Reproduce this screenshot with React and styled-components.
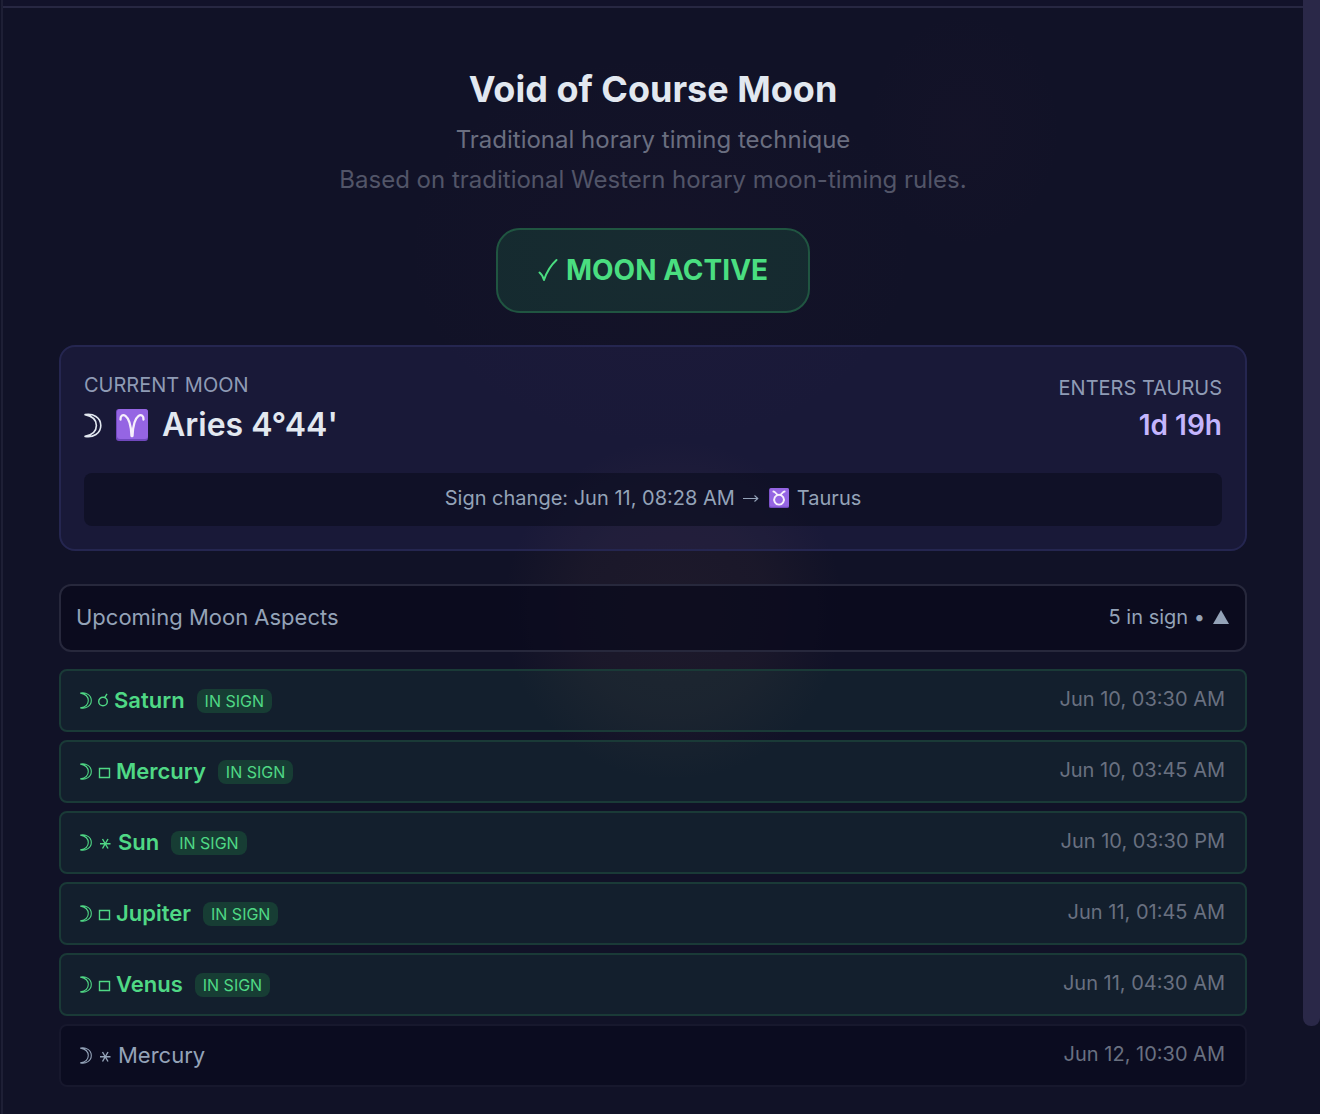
import React, { useState } from "react";
import styled, { createGlobalStyle } from "styled-components";

const GlobalStyle = createGlobalStyle`
  *, *::before, *::after { box-sizing: border-box; }
  html, body, #root { height: 100%; }
  body {
    margin: 0;
    background: #0f1025;
    color: #e2e8f0;
    font-family: Inter, "Liberation Sans", sans-serif;
    overflow: hidden;
  }
  h1, h2, p, ul { margin: 0; padding: 0; }
`;

const Shell = styled.div`
  display: flex;
  height: 100vh;
  padding-left: 1px;
  overflow: hidden;
  background:
    radial-gradient(circle 170px at 51% 610px, rgba(120, 80, 70, 0.12), rgba(120, 80, 70, 0.09) 55%, transparent),
    radial-gradient(ellipse 260px 200px at 50% 250px, rgba(110, 50, 80, 0.04), transparent),
    radial-gradient(ellipse 100px 120px at 73% 130px, rgba(110, 50, 80, 0.03), transparent),
    #111227;
`;

const Panel = styled.div`
  flex: 1;
  min-width: 0;
  border-left: 2px solid #1e1f35;
`;

const TopBar = styled.div`
  height: 8px;
  background: #12122a;
  border-bottom: 2px solid #272742;
`;

const Content = styled.main`
  padding: 57px 56px 24px;
`;

const ScrollTrack = styled.div`
  width: 17px;
  flex: none;
`;

const ScrollThumb = styled.div`
  height: 92.1%;
  background: #2a2848;
  border-radius: 0 0 8px 8px;
`;

const Header = styled.header`
  display: flex;
  flex-direction: column;
  align-items: center;
  text-align: center;
`;

const Title = styled.h1`
  font-size: 36px;
  line-height: 48px;
  font-weight: 700;
  margin-bottom: 7px;
`;

const Subtitle = styled.p`
  font-size: 24px;
  line-height: 40px;
  color: ${(p) => (p.$faint ? "#525568" : "#6a6e80")};
`;

const StatusPill = styled.div`
  display: flex;
  align-items: center;
  gap: 8px;
  margin: 28px 0 32px;
  padding: 20px 40px;
  border: 2px solid #205541;
  border-radius: 24px;
  background: rgba(40, 190, 98, 0.14);
  color: #4ade80;
  font-size: 28px;
  line-height: 41px;
  font-weight: 700;
`;

const MoonCard = styled.section`
  padding: 23px;
  border: 2px solid #252650;
  border-radius: 16px;
  background: rgba(85, 75, 180, 0.13);
`;

const CardTop = styled.div`
  display: flex;
  align-items: center;
  justify-content: space-between;
  margin-bottom: 23px;
`;

const CardColumn = styled.div`
  text-align: ${(p) => (p.$end ? "right" : "left")};
`;

const Label = styled.p`
  font-size: 20px;
  line-height: 30px;
  color: #8f9bb5;
`;

const MoonPosition = styled.h2`
  display: flex;
  align-items: center;
  gap: 14px;
  font-size: 32px;
  line-height: 50px;
  font-weight: 600;
`;

const Countdown = styled.p`
  font-size: 28px;
  line-height: 44px;
  font-weight: 600;
  color: #c4b5fd;
`;

const SignChange = styled.p`
  display: flex;
  align-items: center;
  justify-content: center;
  gap: 8px;
  padding: 10px 12px 13px;
  border-radius: 8px;
  background: rgba(13, 14, 33, 0.7);
  color: #94a3b8;
  font-size: 20px;
  line-height: 30px;
`;

const AspectsToggle = styled.button`
  display: flex;
  align-items: center;
  justify-content: space-between;
  width: 100%;
  margin: 33px 0 17px;
  padding: 15px 16px 17px 15px;
  border: 2px solid #27283c;
  border-radius: 12px;
  background: rgba(9, 10, 28, 0.75);
  color: #94a3b8;
  font-family: inherit;
  font-size: 22px;
  line-height: 32px;
  cursor: pointer;
`;

const ToggleCount = styled.span`
  display: flex;
  align-items: center;
  gap: 8px;
  font-size: 20px;
`;

const AspectList = styled.ul`
  display: flex;
  flex-direction: column;
  gap: 8px;
  list-style: none;
`;

const AspectRow = styled.li`
  display: flex;
  align-items: flex-start;
  justify-content: space-between;
  padding: 12px 20px 12px 19px;
  border: 2px solid ${(p) => (p.$inSign ? "#1a3a37" : "#17182d")};
  border-radius: 8px;
  background: ${(p) => (p.$inSign ? "rgba(55, 190, 125, 0.08)" : "rgba(9, 9, 28, 0.6)")};
  color: ${(p) => (p.$inSign ? "#4fd885" : "#94a3b8")};
`;

const AspectName = styled.div`
  display: flex;
  align-items: center;
  gap: 5px;
  font-size: 22px;
  line-height: 35px;
  font-weight: ${(p) => (p.$inSign ? 600 : 400)};
`;

const Badge = styled.span`
  margin-left: 7px;
  padding: 0 8px;
  border-radius: 8px;
  background: #173d34;
  font-size: 16px;
  line-height: 24px;
  font-weight: 400;
`;

const AspectTime = styled.time`
  font-size: 20px;
  line-height: 32px;
  color: #697080;
`;

function MoonIcon({ width, height }) {
  return (
    <svg width={width} height={height} viewBox="0 0 12 17" role="img" aria-label="Moon" fill="none" stroke="currentColor" strokeWidth="1.1">
      <path d="M.6 1.1C6 .1 11.3 3 11.3 8.5S6 16.9.6 15.9C5.200 15 8.300 12.500 8.300 8.500S5.200 2 .6 1.100Z" strokeLinejoin="round" />
    </svg>
  );
}

function CheckIcon() {
  return (
    <svg width="20" height="26" viewBox="0 0 20 26" aria-hidden="true" fill="none" stroke="currentColor" strokeWidth="2" strokeLinecap="round" strokeLinejoin="round">
      <path d="M1.500 14.500c2 1.500 3.500 4 4.500 7.500C8.500 14.500 13 7 18.500 2" />
    </svg>
  );
}

function ArrowIcon() {
  return (
    <svg width="18" height="10" viewBox="0 0 18 10" role="img" aria-label="to" fill="none" stroke="currentColor" strokeWidth="1.100">
      <path d="M0 5.500H14.500M11.500 2.500L14.800 5.500L11.500 8.500" />
    </svg>
  );
}

function TriangleIcon({ flipped }) {
  return (
    <svg width="16" height="14" viewBox="0 0 16 14" aria-hidden="true" fill="currentColor">
      <path d={flipped ? "M0 0H16L8 14Z" : "M0 14H16L8 0Z"} />
    </svg>
  );
}

const zodiacPaths = {
  Aries: "M4.500 10.500C4 3.500 14.500 2.500 15.500 27h1C17.500 2.500 28 3.500 27.500 10.500",
  Taurus: "M7 5.500C11 5.500 10.500 11 16 11S21 5.500 25 5.500M16 11a7.800 7.800 0 1 0 .1 0Z",
};

function ZodiacIcon({ sign, size }) {
  return (
    <svg width={size} height={size} viewBox="0 0 32 32" role="img" aria-label={sign}>
      <rect width="32" height="32" rx="3" fill="#7048bd" />
      <rect x="1" y="0" width="31" height="30" rx="3" fill="#9565e3" />
      <path d={zodiacPaths[sign]} fill="none" stroke="#f6effc" strokeWidth={size < 24 ? 3 : 2.3} strokeLinecap="round" strokeLinejoin="round" />
    </svg>
  );
}

const aspectShapes = {
  Conjunction: {
    width: 12,
    art: (
      <>
        <circle cx="6" cy="8.500" r="4.300" />
        <path d="M7.500 4.800L10 0.800" />
      </>
    ),
  },
  Square: { width: 14, art: <path d="M2.500 4.500H12.500V13.500H2.500Z" /> },
  Sextile: { width: 16, art: <path d="M3 8.800H13.500M5.500 4L11 13.500M11 4L5.500 13.500" /> },
};

function AspectIcon({ kind }) {
  const { width, art } = aspectShapes[kind];
  return (
    <svg width={width} height="16" viewBox={`0 0 ${width} 16`} role="img" aria-label={kind} fill="none" stroke="currentColor" strokeWidth="1.400">
      {art}
    </svg>
  );
}

const aspects = [
  { kind: "Conjunction", planet: "Saturn", time: "Jun 10, 03:30 AM", inSign: true },
  { kind: "Square", planet: "Mercury", time: "Jun 10, 03:45 AM", inSign: true },
  { kind: "Sextile", planet: "Sun", time: "Jun 10, 03:30 PM", inSign: true },
  { kind: "Square", planet: "Jupiter", time: "Jun 11, 01:45 AM", inSign: true },
  { kind: "Square", planet: "Venus", time: "Jun 11, 04:30 AM", inSign: true },
  { kind: "Sextile", planet: "Mercury", time: "Jun 12, 10:30 AM", inSign: false },
];

export default function App() {
  const [open, setOpen] = useState(true);
  const inSignCount = aspects.filter((a) => a.inSign).length;

  return (
    <>
      <GlobalStyle />
      <Shell>
        <Panel>
          <TopBar />
          <Content>
            <Header>
              <Title>Void of Course Moon</Title>
              <Subtitle>Traditional horary timing technique</Subtitle>
              <Subtitle $faint>Based on traditional Western horary moon-timing rules.</Subtitle>
              <StatusPill>
                <CheckIcon />
                MOON ACTIVE
              </StatusPill>
            </Header>

            <MoonCard>
              <CardTop>
                <CardColumn>
                  <Label>CURRENT MOON</Label>
                  <MoonPosition>
                    <MoonIcon width={18} height={25} />
                    <ZodiacIcon sign="Aries" size={32} />
                    <span>Aries 4°44'</span>
                  </MoonPosition>
                </CardColumn>
                <CardColumn $end>
                  <Label>ENTERS TAURUS</Label>
                  <Countdown>1d 19h</Countdown>
                </CardColumn>
              </CardTop>
              <SignChange>
                <span>Sign change: Jun 11, 08:28 AM</span>
                <ArrowIcon />
                <ZodiacIcon sign="Taurus" size={20} />
                <span>Taurus</span>
              </SignChange>
            </MoonCard>

            <AspectsToggle type="button" aria-expanded={open} onClick={() => setOpen(!open)}>
              <span>Upcoming Moon Aspects</span>
              <ToggleCount>
                <span>{inSignCount} in sign •</span>
                <TriangleIcon flipped={!open} />
              </ToggleCount>
            </AspectsToggle>

            {open && (
              <AspectList>
                {aspects.map((a) => (
                  <AspectRow key={a.time} $inSign={a.inSign}>
                    <AspectName $inSign={a.inSign}>
                      <MoonIcon width={12} height={17} />
                      <AspectIcon kind={a.kind} />
                      <span>{a.planet}</span>
                      {a.inSign && <Badge>IN SIGN</Badge>}
                    </AspectName>
                    <AspectTime>{a.time}</AspectTime>
                  </AspectRow>
                ))}
              </AspectList>
            )}
          </Content>
        </Panel>
        <ScrollTrack>
          <ScrollThumb />
        </ScrollTrack>
      </Shell>
    </>
  );
}
